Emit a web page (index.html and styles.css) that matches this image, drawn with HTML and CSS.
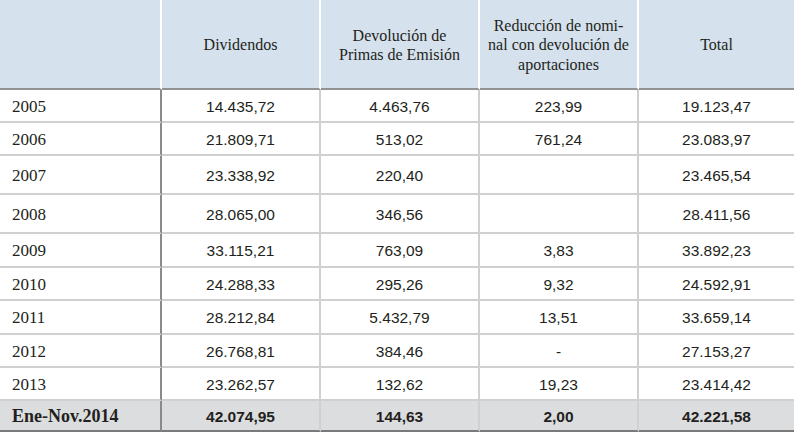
FILE: index.html
```html
<!DOCTYPE html>
<html lang="es">
<head>
<meta charset="utf-8">
<title>Dividendos</title>
<link rel="stylesheet" href="styles.css">
</head>
<body>
<div class="table">
  <div class="hd first"></div>
  <div class="hd">Dividendos</div>
  <div class="hd">Devolución de<br>Primas de Emisión</div>
  <div class="hd">Reducción de nomi-<br>nal con devolución de<br>aportaciones</div>
  <div class="hd last">Total</div>

  <div class="yr">2005</div><div class="num">14.435,72</div><div class="num">4.463,76</div><div class="num">223,99</div><div class="num last">19.123,47</div>
  <div class="yr">2006</div><div class="num">21.809,71</div><div class="num">513,02</div><div class="num">761,24</div><div class="num last">23.083,97</div>
  <div class="yr">2007</div><div class="num">23.338,92</div><div class="num">220,40</div><div class="num"></div><div class="num last">23.465,54</div>
  <div class="yr">2008</div><div class="num">28.065,00</div><div class="num">346,56</div><div class="num"></div><div class="num last">28.411,56</div>
  <div class="yr">2009</div><div class="num">33.115,21</div><div class="num">763,09</div><div class="num">3,83</div><div class="num last">33.892,23</div>
  <div class="yr">2010</div><div class="num">24.288,33</div><div class="num">295,26</div><div class="num">9,32</div><div class="num last">24.592,91</div>
  <div class="yr">2011</div><div class="num">28.212,84</div><div class="num">5.432,79</div><div class="num">13,51</div><div class="num last">33.659,14</div>
  <div class="yr">2012</div><div class="num">26.768,81</div><div class="num">384,46</div><div class="num">-</div><div class="num last">27.153,27</div>
  <div class="yr">2013</div><div class="num">23.262,57</div><div class="num">132,62</div><div class="num">19,23</div><div class="num last">23.414,42</div>
  <div class="yr tot">Ene-Nov.2014</div><div class="num tot">42.074,95</div><div class="num tot">144,63</div><div class="num tot">2,00</div><div class="num tot last">42.221,58</div>
</div>
</body>
</html>
```

FILE: styles.css
```css
html, body {
  margin: 0;
  padding: 0;
  background: #ffffff;
}

.table {
  display: grid;
  width: 794px;
  grid-template-columns: 162px 159px 159px 159px 155px;
  grid-template-rows: 90px 33px 33px 39px 39px 34px 33px 34px 33px 33px 31px;
  color: #231f20;
}

.table > div {
  box-sizing: border-box;
  display: flex;
  align-items: center;
  border-right: 2px solid #d0d0d0;
  border-bottom: 2px solid #d0d0d0;
}

.table > .last {
  border-right: 0;
}

.hd {
  background: #d5e1ec;
  font-family: "Liberation Serif", "Times New Roman", serif;
  font-size: 16px;
  line-height: 19.5px;
  justify-content: center;
  text-align: center;
  padding-top: 2px;
}

.table > .hd {
  border-right-color: #ffffff;
  border-bottom-color: #929292;
}

.yr {
  font-family: "Liberation Serif", "Times New Roman", serif;
  font-size: 17px;
  padding-left: 12px;
  padding-top: 2px;
}

.table > .yr {
  border-right-color: #8a8a8a;
}

.num {
  font-family: "Liberation Sans", Arial, sans-serif;
  font-size: 15.5px;
  justify-content: center;
  padding-top: 2px;
}

.tot {
  background: #dcdddf;
  font-weight: bold;
}

.yr.tot {
  font-size: 18px;
}

.table > .tot {
  border-bottom-color: #7a7a7a;
}
```
